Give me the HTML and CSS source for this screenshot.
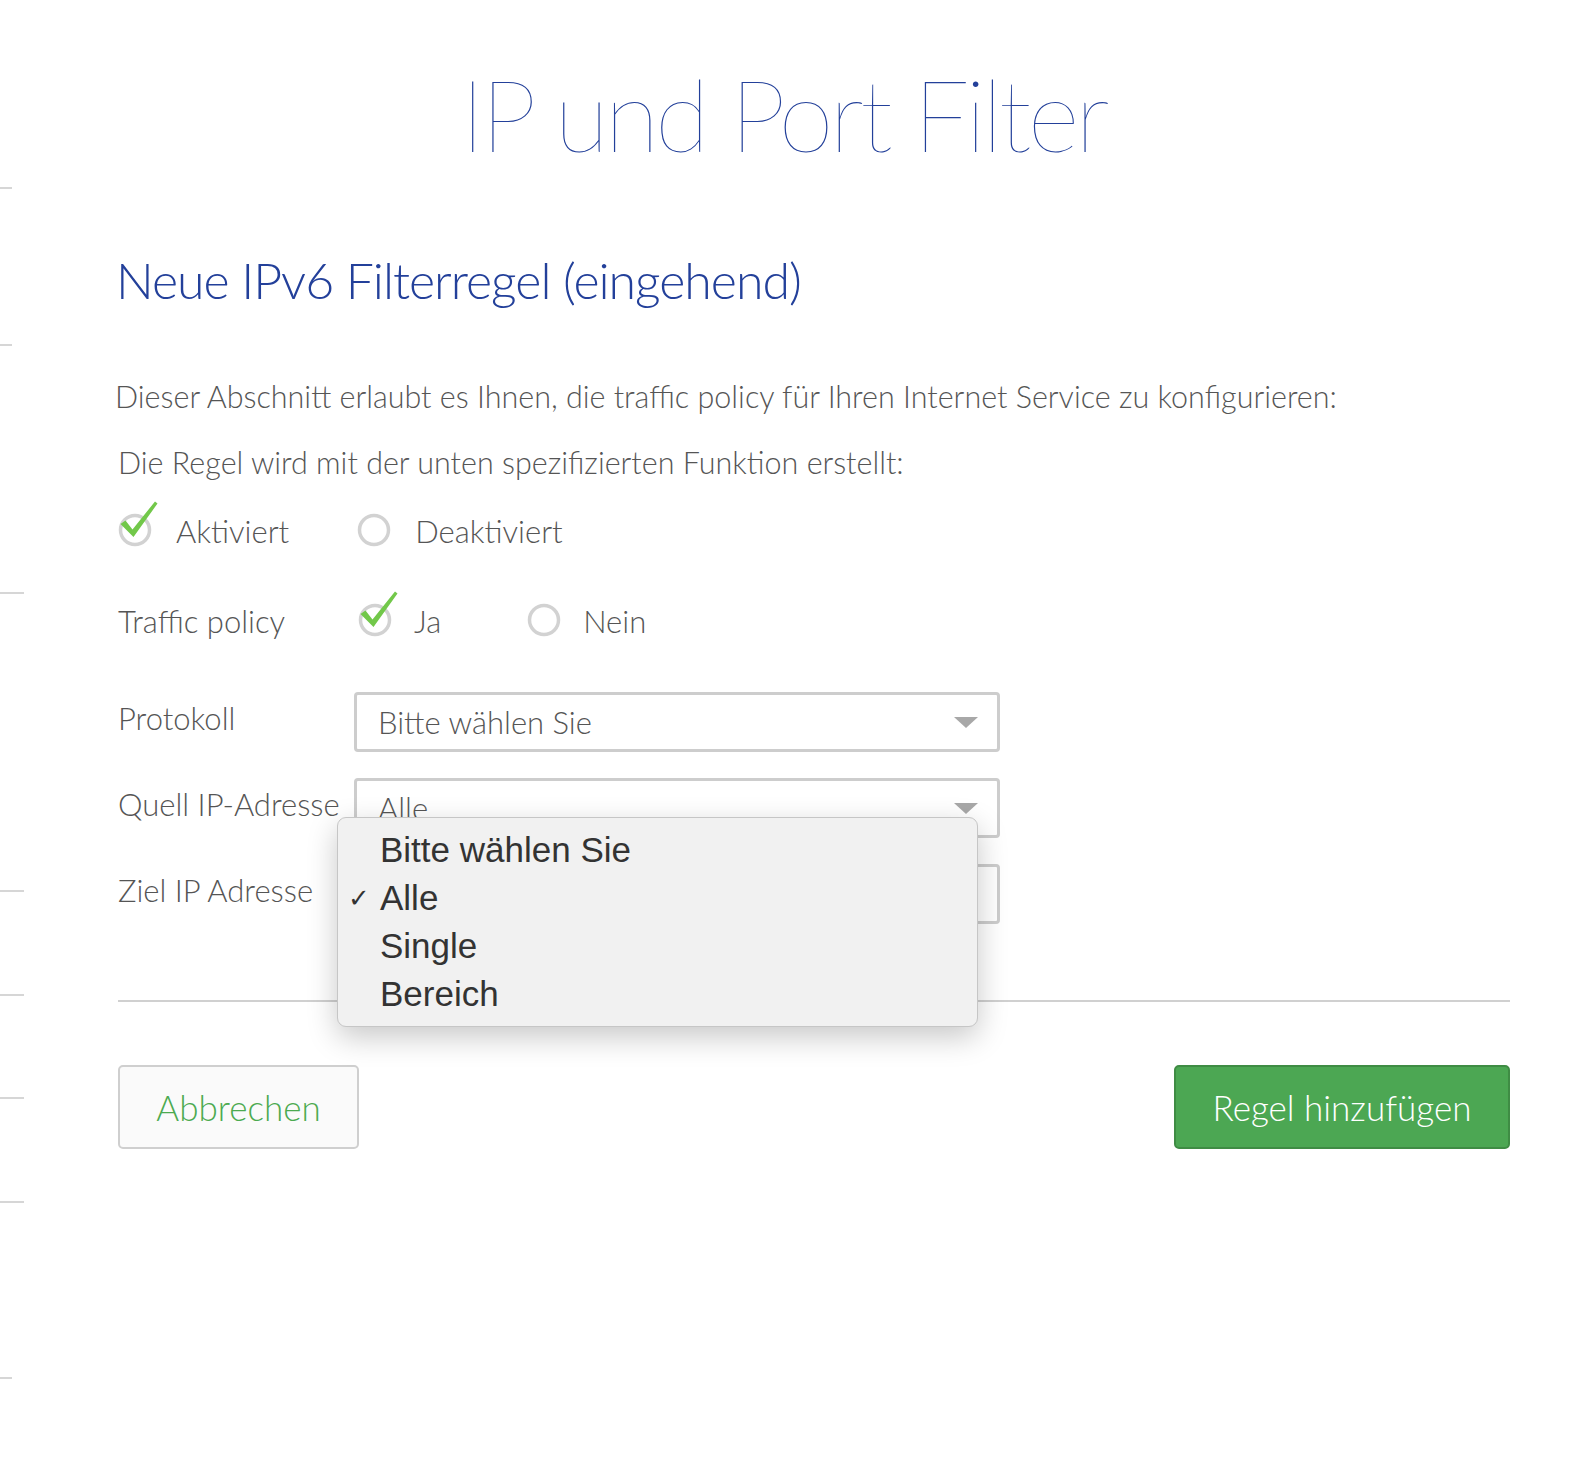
FILE: index.html
```html
<!DOCTYPE html>
<html lang="de">
<head>
<meta charset="utf-8">
<title>IP und Port Filter</title>
<link rel="stylesheet" href="styles.css">
</head>
<body>
<div class="page">
  <aside class="rail">
    <span class="tick short t1"></span>
    <span class="tick short t2"></span>
    <span class="tick t3"></span>
    <span class="tick t4"></span>
    <span class="tick t5"></span>
    <span class="tick t6"></span>
    <span class="tick t7"></span>
    <span class="tick short t8"></span>
  </aside>
  <main class="content">
    <h1 class="title">IP und Port Filter</h1>
    <h2 class="subtitle">Neue IPv6 Filterregel (eingehend)</h2>
    <p class="intro">Dieser Abschnitt erlaubt es Ihnen, die traffic policy für Ihren Internet Service zu konfigurieren:</p>
    <p class="intro second">Die Regel wird mit der unten spezifizierten Funktion erstellt:</p>

    <div class="radio-row first-radios">
      <span class="radio checked">
        <svg class="radio-icon" viewBox="0 0 44 48" width="44" height="48"><circle cx="17" cy="30" r="14.5" fill="none" stroke="#d2d2d2" stroke-width="3.5"/><path d="M2.5 24 L7.5 20.5 L14.5 29.5 L37 1.5 L39.5 3.5 L15.5 37 Z" fill="#72c84a"/></svg>
        <span class="radio-text">Aktiviert</span>
      </span>
      <span class="radio">
        <svg class="radio-icon" viewBox="0 0 44 48" width="44" height="48"><circle cx="17" cy="30" r="14.5" fill="none" stroke="#d2d2d2" stroke-width="3.5"/></svg>
        <span class="radio-text">Deaktiviert</span>
      </span>
    </div>

    <div class="form-row policy-row">
      <span class="label">Traffic policy</span>
      <div class="radio-row">
        <span class="radio checked">
          <svg class="radio-icon" viewBox="0 0 44 48" width="44" height="48"><circle cx="17" cy="30" r="14.5" fill="none" stroke="#d2d2d2" stroke-width="3.5"/><path d="M2.5 24 L7.5 20.5 L14.5 29.5 L37 1.5 L39.5 3.5 L15.5 37 Z" fill="#72c84a"/></svg>
          <span class="radio-text">Ja</span>
        </span>
        <span class="radio">
          <svg class="radio-icon" viewBox="0 0 44 48" width="44" height="48"><circle cx="17" cy="30" r="14.5" fill="none" stroke="#d2d2d2" stroke-width="3.5"/></svg>
          <span class="radio-text">Nein</span>
        </span>
      </div>
    </div>

    <div class="form-row select-row">
      <span class="label">Protokoll</span>
      <div class="select"><span class="select-value">Bitte wählen Sie</span><span class="arrow"></span></div>
    </div>
    <div class="form-row select-row raised">
      <span class="label">Quell IP-Adresse</span>
      <div class="select open">
        <span class="select-value">Alle</span><span class="arrow"></span>
        <ul class="menu">
          <li>Bitte wählen Sie</li>
          <li class="selected">Alle</li>
          <li>Single</li>
          <li>Bereich</li>
        </ul>
      </div>
    </div>
    <div class="form-row select-row">
      <span class="label">Ziel IP Adresse</span>
      <div class="select"><span class="select-value">Alle</span><span class="arrow"></span></div>
    </div>

    <hr class="divider">

    <div class="actions">
      <button class="btn btn-cancel" type="button">Abbrechen</button>
      <button class="btn btn-primary" type="button">Regel hinzufügen</button>
    </div>
  </main>
</div>
</body>
</html>
```
FILE: styles.css
```css
* { box-sizing: border-box; }
html, body { margin: 0; padding: 0; background: #fff; }
body {
  font-family: Lato, "Open Sans", "Liberation Sans", sans-serif;
  font-weight: 300;
  color: #555;
}
.page {
  display: flex;
  width: 1580px;
  min-height: 1472px;
}
.rail {
  width: 0;
  display: flex;
  flex-direction: column;
  flex: none;
}
.tick {
  display: block;
  height: 2px;
  width: 24px;
  background: #d6d6d6;
  flex: none;
}
.tick.short { width: 12px; }
.t1 { margin-top: 187px; }
.t2 { margin-top: 155px; }
.t3 { margin-top: 246px; }
.t4 { margin-top: 296px; }
.t5 { margin-top: 102px; }
.t6 { margin-top: 101px; }
.t7 { margin-top: 102px; }
.t8 { margin-top: 174px; }

.content {
  flex: none;
  width: 1580px;
  padding: 0 70px 0 118px;
}
.title {
  margin: 53px 0 0 -118px;
  width: 1580px;
  text-align: center;
  font-weight: 100;
  font-size: 100px;
  line-height: 120px;
  letter-spacing: -4px;
  color: #23409a;
  padding-right: 14px;
}
.subtitle {
  margin: 77px 0 0 -2px;
  font-weight: 300;
  font-size: 50px;
  line-height: 60px;
  letter-spacing: -1px;
  color: #23409a;
}
.intro {
  margin: 66px 0 0 -3px;
  font-size: 30.5px;
  line-height: 40px;
}
.intro.second { margin: 26px 0 0 0; }

.radio-row {
  display: flex;
  align-items: center;
}
.first-radios { margin-top: 30px; }
.radio {
  display: inline-flex;
  align-items: center;
  font-size: 31px;
}
.radio + .radio { margin-left: 68px; }
.radio-icon { flex: none; margin-top: -14px; }
.radio-text { margin-left: 14px; }

.form-row {
  display: flex;
  align-items: center;
}
.label {
  width: 236px;
  flex: none;
  font-size: 31px;
}
.policy-row { margin-top: 52px; }
.policy-row .label { width: 240px; }
.policy-row .radio-text { margin-left: 12px; }
.policy-row .radio + .radio { margin-left: 86px; }

.select-row { margin-top: 26px; }
.select-row .label { padding-bottom: 8px; }
.policy-row + .select-row { margin-top: 52px; }
.select {
  position: relative;
  width: 646px;
  height: 60px;
  border: 3px solid #cdcdcd;
  border-radius: 4px;
  display: flex;
  align-items: center;
  padding: 0 0 0 21px;
  font-size: 31px;
  background: #fff;
}
.select-row.raised { position: relative; z-index: 5; }
.select-value { flex: 1; }
.arrow {
  width: 0; height: 0;
  border-left: 12px solid transparent;
  border-right: 12px solid transparent;
  border-top: 11px solid #a8a8a8;
  margin-right: 19px;
}
.menu {
  position: absolute;
  left: -20px;
  top: 36px;
  width: 641px;
  margin: 0;
  padding: 8px 0 8px;
  list-style: none;
  background: #f1f1f1;
  border: 1px solid #c6c6c6;
  border-radius: 9px;
  box-shadow: 0 10px 30px rgba(0,0,0,0.22);
  z-index: 5;
  font-family: "Liberation Sans", Arial, sans-serif;
  font-weight: 400;
  font-size: 35px;
  color: #333;
}
.menu li {
  height: 48px;
  line-height: 48px;
  padding-left: 42px;
  position: relative;
}
.menu li.selected::before {
  content: "✓";
  position: absolute;
  left: 10px;
  font-size: 26px;
  font-family: "DejaVu Sans", sans-serif;
}

.divider {
  margin: 76px 0 0 0;
  border: 0;
  height: 2px;
  background: #d0d0d0;
  width: 1392px;
}
.actions {
  margin-top: 63px;
  display: flex;
  justify-content: space-between;
  width: 1392px;
}
.btn {
  height: 84px;
  border-radius: 5px;
  font-family: Lato, "Open Sans", sans-serif;
  font-weight: 300;
  font-size: 35px;
  padding: 0;
}
.btn-cancel {
  width: 241px;
  background: #fafafa;
  border: 2px solid #cfcfcf;
  color: #4caa50;
}
.btn-primary {
  width: 336px;
  background: #4ca753;
  border: 2px solid #3f8c44;
  color: #fff;
}
```
